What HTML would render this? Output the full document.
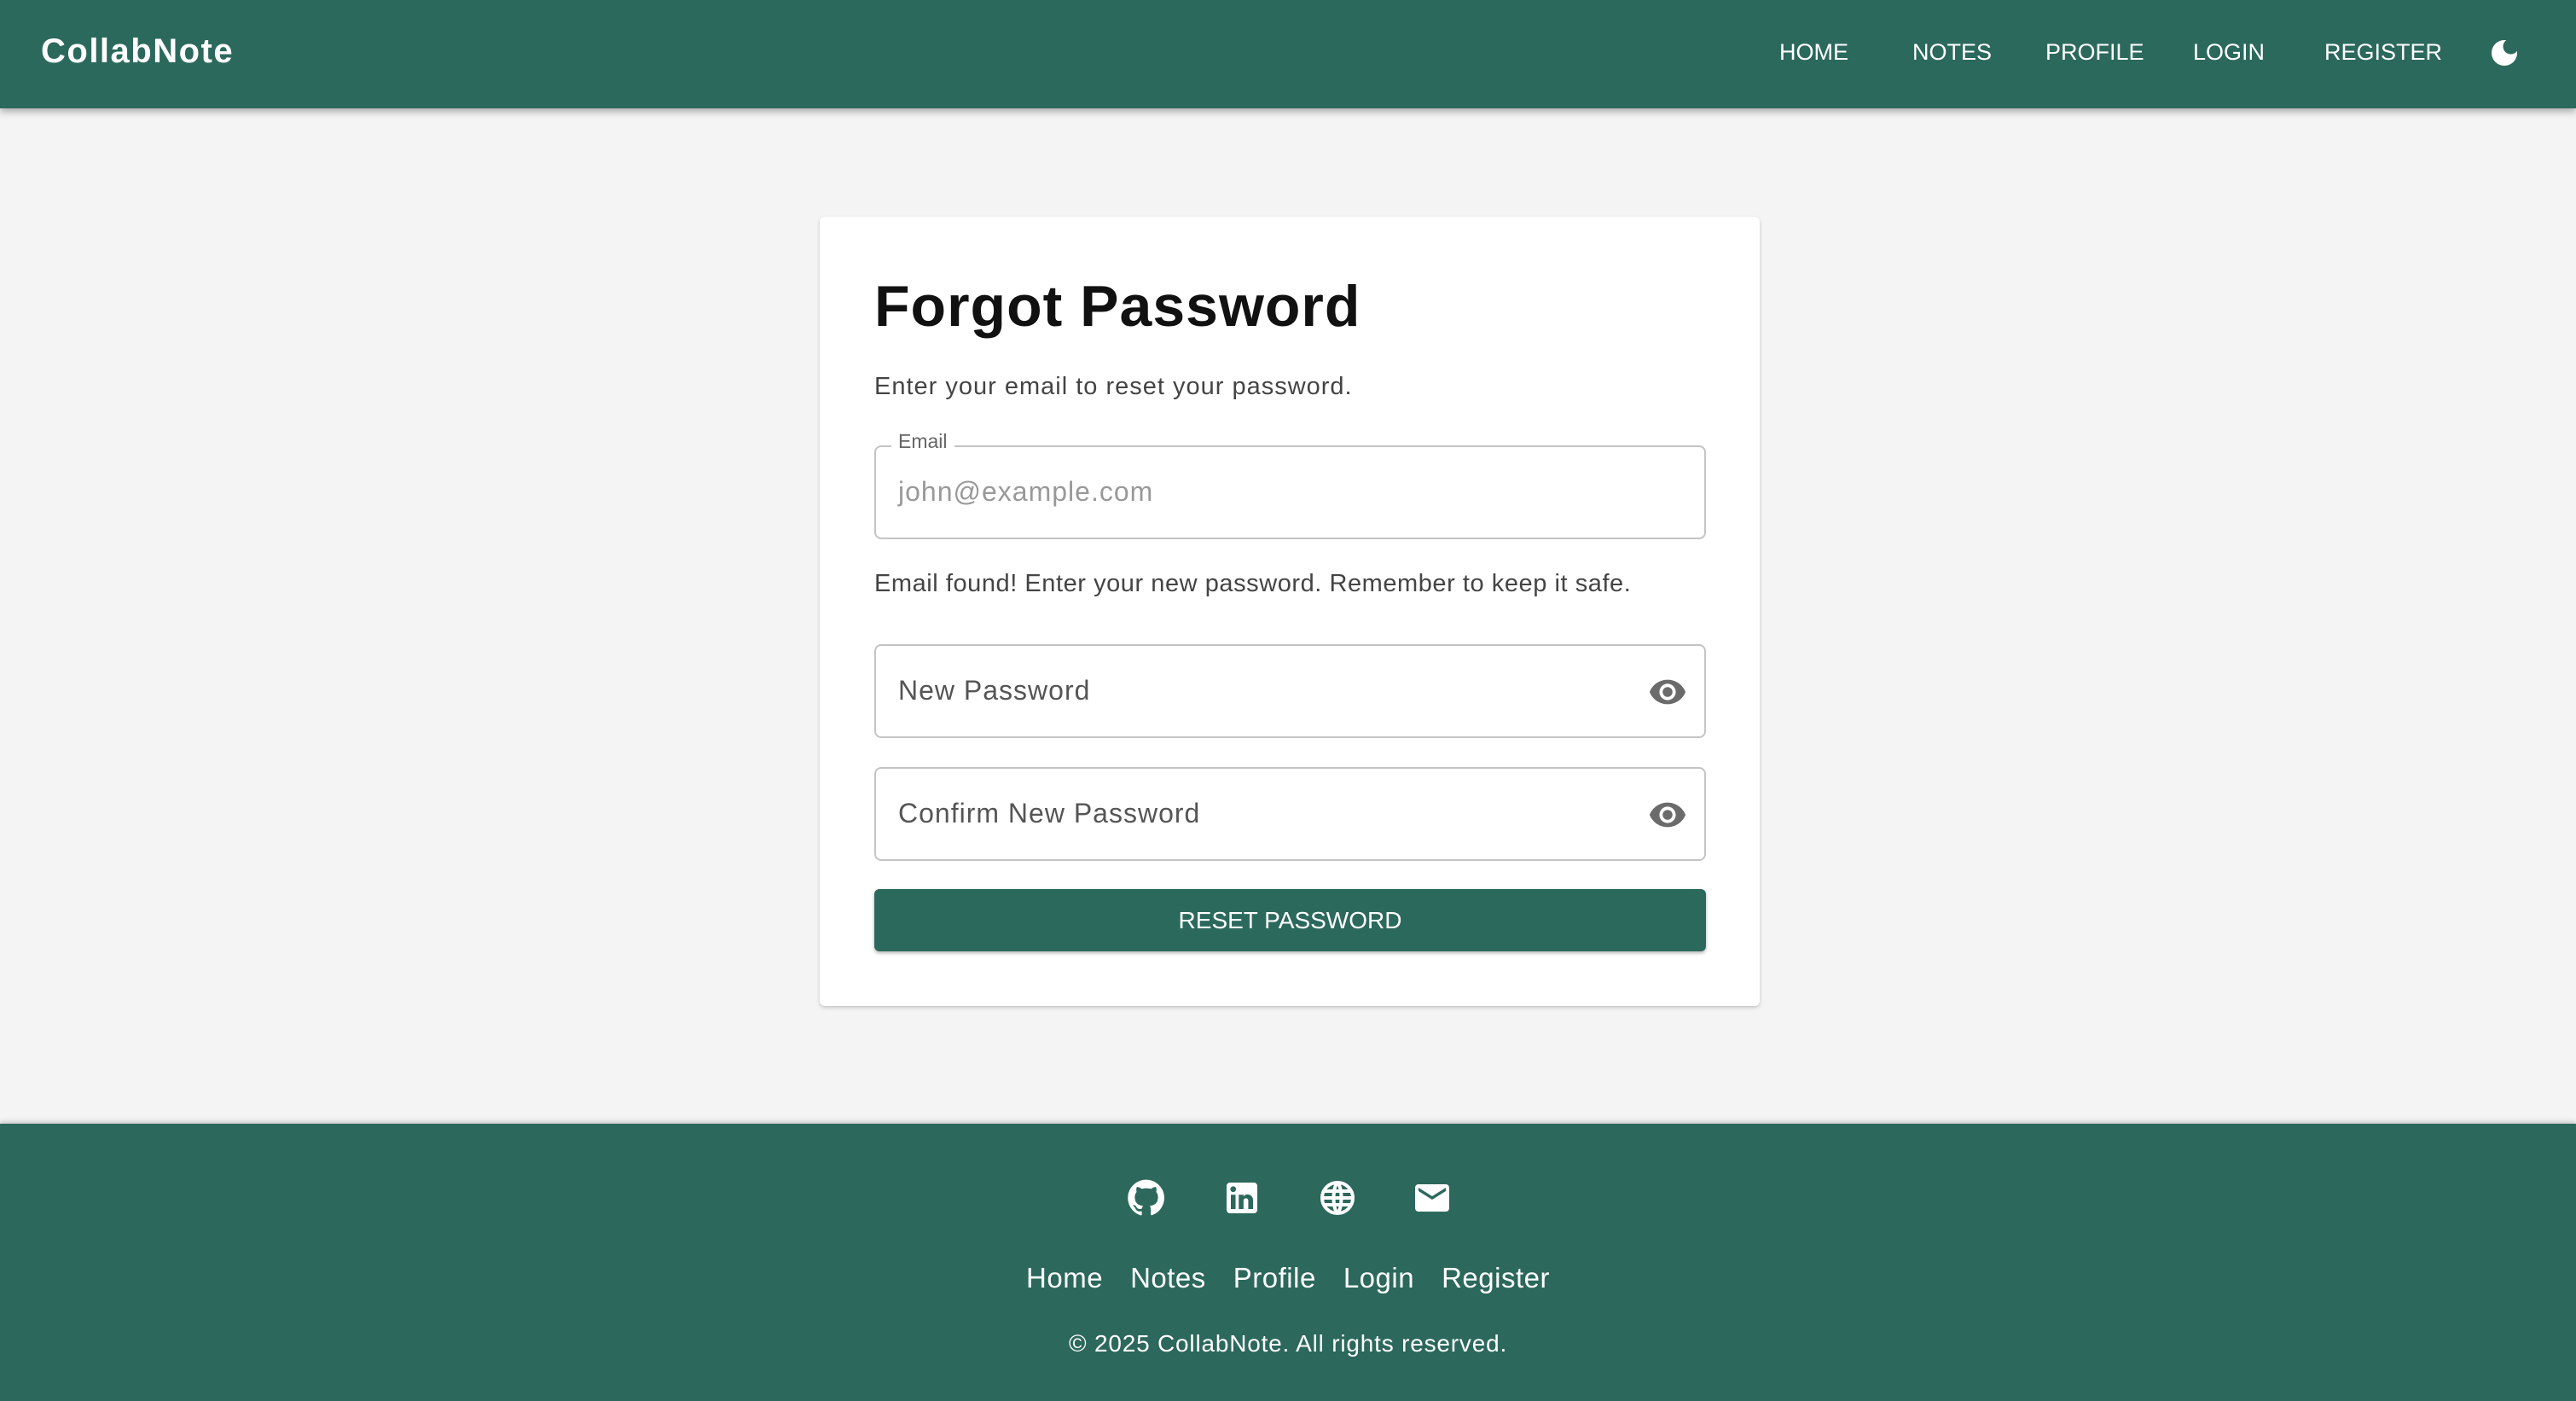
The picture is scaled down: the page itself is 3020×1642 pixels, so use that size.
<!DOCTYPE html>
<html><head><meta charset="utf-8"><style>
*{box-sizing:border-box;margin:0;padding:0}
body{width:3020px;height:1642px;background:#f4f4f4;font-family:"Liberation Sans",sans-serif;position:relative;overflow:hidden}
.nav{position:absolute;left:0;top:0;width:3020px;height:127px;background:#2c695d;box-shadow:0 4px 8px rgba(0,0,0,.3);color:#fff}
.logo{position:absolute;left:48px;top:38px;font-size:40px;font-weight:bold;letter-spacing:1.5px}
.ni{position:absolute;top:46px;font-size:27px}
.card{position:absolute;left:961px;top:254px;width:1102px;height:925px;background:#fff;border-radius:6px;box-shadow:0 2px 4px rgba(0,0,0,.2)}
.abs{position:absolute}
.field{position:absolute;left:64px;width:975px;height:110px;border:2px solid #c4c4c4;border-radius:8px}
.ph{position:absolute;left:26px;top:34px;font-size:32px;color:#555;letter-spacing:1px}
.eye{position:absolute;right:18px;top:31px}
.btn{position:absolute;left:64px;top:788px;width:975px;height:73px;background:#2c695d;border-radius:6px;color:#fff;font-size:28px;text-align:center;line-height:73px;box-shadow:0 2px 4px rgba(0,0,0,.3)}
.foot{position:absolute;left:0;top:1317px;width:3020px;height:325px;background:#2c685c;color:#fff;box-shadow:0 -2px 6px rgba(0,0,0,.2)}
</style></head><body>
<div class="nav">
<div class="logo">CollabNote</div>
<div class="ni" style="left:2086px">HOME</div>
<div class="ni" style="left:2242px">NOTES</div>
<div class="ni" style="left:2398px">PROFILE</div>
<div class="ni" style="left:2571px">LOGIN</div>
<div class="ni" style="left:2725px">REGISTER</div>
<svg class="abs" style="left:2916px;top:42px" width="40" height="40" viewBox="0 0 24 24"><path fill="#fff" d="M12 3a9 9 0 1 0 9 9c0-.46-.04-.92-.1-1.36a5.39 5.39 0 0 1-4.4 2.26 5.4 5.4 0 0 1-3.14-9.8c-.44-.06-.9-.1-1.36-.1z"/></svg>
</div>
<div class="card">
<div class="abs" style="left:64px;top:66px;font-size:68px;font-weight:bold;color:#111;letter-spacing:1px">Forgot Password</div>
<div class="abs" style="left:64px;top:183px;font-size:29px;color:#444;letter-spacing:1px">Enter your email to reset your password.</div>
<div class="field" style="top:268px"><div class="abs" style="left:18px;top:-20px;background:#fff;padding:0 8px;font-size:23px;color:#666">Email</div><div class="ph" style="color:#999">john@example.com</div></div>
<div class="abs" style="left:64px;top:414px;font-size:29px;color:#444;letter-spacing:0.55px">Email found! Enter your new password. Remember to keep it safe.</div>
<div class="field" style="top:501px"><div class="ph">New Password</div><svg class="eye" width="50" height="46" viewBox="0 0 24 24"><path fill="#6b6b6b" d="M12 4.5C7 4.5 2.73 7.61 1 12c1.73 4.39 6 7.5 11 7.5s9.27-3.11 11-7.5c-1.73-4.39-6-7.5-11-7.5zM12 17a5 5 0 1 1 0-10 5 5 0 0 1 0 10zm0-8a3 3 0 1 0 0 6 3 3 0 0 0 0-6z"/></svg></div>
<div class="field" style="top:645px"><div class="ph">Confirm New Password</div><svg class="eye" width="50" height="46" viewBox="0 0 24 24"><path fill="#6b6b6b" d="M12 4.5C7 4.5 2.73 7.61 1 12c1.73 4.39 6 7.5 11 7.5s9.27-3.11 11-7.5c-1.73-4.39-6-7.5-11-7.5zM12 17a5 5 0 1 1 0-10 5 5 0 0 1 0 10zm0-8a3 3 0 1 0 0 6 3 3 0 0 0 0-6z"/></svg></div>
<div class="btn">RESET PASSWORD</div>
</div>
<div class="foot">
<svg class="abs" style="left:1320px;top:63px" width="48" height="48" viewBox="0 0 24 24"><path fill="#fff" d="M12 1.3a10.7 10.7 0 0 0-3.4 20.9c.5.1.7-.2.7-.5v-1.9c-3 .6-3.6-1.3-3.6-1.3-.5-1.2-1.2-1.6-1.2-1.6-1-.7.1-.7.1-.7 1.1.1 1.6 1.1 1.6 1.1 1 1.7 2.6 1.2 3.2.9.1-.7.4-1.200.7-1.5-2.4-.3-4.9-1.2-4.9-5.300 0-1.200.4-2.100 1.100-2.900-.1-.3-.5-1.400.1-2.900 0 0 .9-.3 2.9 1.1a10 10 0 0 1 5.4 0c2-1.4 2.9-1.1 2.9-1.1.6 1.5.2 2.6.1 2.9.7.8 1.1 1.7 1.1 2.9 0 4.1-2.5 5-4.9 5.3.4.3.7 1 .7 2v2.9c0 .3.2.6.7.5A10.7 10.7 0 0 0 12 1.3z"/></svg>
<svg class="abs" style="left:1432px;top:63px" width="48" height="48" viewBox="0 0 24 24"><path fill="#fff" d="M19 3a2 2 0 0 1 2 2v14a2 2 0 0 1-2 2H5a2 2 0 0 1-2-2V5a2 2 0 0 1 2-2h14zm-.5 15.5v-5.3a3.26 3.26 0 0 0-3.26-3.26c-.85 0-1.840.52-2.320 1.3v-1.11h-2.79v8.37h2.79v-4.93c0-.77.62-1.4 1.39-1.4a1.4 1.4 0 0 1 1.4 1.4v4.93h2.79zM6.880 8.560a1.680 1.680 0 0 0 1.680-1.680c0-.93-.75-1.69-1.68-1.69a1.690 1.690 0 0 0-1.690 1.690c0 .93.76 1.68 1.69 1.68zm1.39 9.94v-8.37H5.5v8.37h2.77z"/></svg>
<svg class="abs" style="left:1544px;top:63px" width="48" height="48" viewBox="0 0 24 24"><g fill="none" stroke="#fff" stroke-width="2"><circle cx="12" cy="12" r="9"/><path d="M3 12h18M4 8h16M4 16h16M12 3c-3 3-3 15 0 18M12 3c3 3 3 15 0 18"/></g></svg>
<svg class="abs" style="left:1655px;top:63px" width="48" height="48" viewBox="0 0 24 24"><path fill="#fff" d="M20 4H4c-1.1 0-2 .9-2 2v12c0 1.1.9 2 2 2h16c1.1 0 2-.9 2-2V6c0-1.1-.9-2-2-2zm0 4-8 5-8-5V6l8 5 8-5v2z"/></svg>
<div class="abs" style="left:0;width:3020px;top:162px;text-align:center;font-size:33px;letter-spacing:0.5px"><span>Home</span><span style="margin-left:32px">Notes</span><span style="margin-left:32px">Profile</span><span style="margin-left:32px">Login</span><span style="margin-left:32px">Register</span></div>
<div class="abs" style="left:0;width:3020px;top:242px;text-align:center;font-size:28px;letter-spacing:0.8px">© 2025 CollabNote. All rights reserved.</div>
</div>
</body></html>
